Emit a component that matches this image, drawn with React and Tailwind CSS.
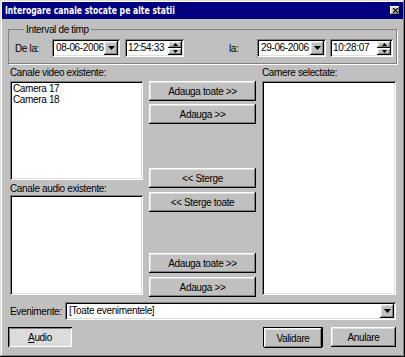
import React from 'react';

const raised =
  'bg-[#c0c0c0] shadow-[inset_-1px_-1px_0_#000,inset_1px_1px_0_#fff,inset_-2px_-2px_0_#808080,inset_2px_2px_0_#dfdfdf]';
const sunken =
  'bg-white shadow-[inset_1px_1px_0_#808080,inset_-1px_-1px_0_#fff,inset_2px_2px_0_#000,inset_-2px_-2px_0_#dfdfdf]';

const DownArrow = () => (
  <svg width="7" height="4" viewBox="0 0 7 4">
    <path d="M0 0h7L3.5 4z" fill="#000" />
  </svg>
);

const DropButton = () => (
  <div className={`w-[14px] h-[14px] shrink-0 flex items-center justify-center ${raised}`}>
    <DownArrow />
  </div>
);

const DateField = ({ value, width }) => (
  <div className={`${width} h-[18px] p-[2px] flex items-center ${sunken}`}>
    <span className="flex-1 pl-[2px] leading-[14px] whitespace-nowrap overflow-hidden">{value}</span>
    <DropButton />
  </div>
);

const TimeField = ({ value, width }) => (
  <div className={`${width} h-[18px] p-[2px] flex items-center ${sunken}`}>
    <span className="flex-1 pl-[1px] leading-[14px] whitespace-nowrap overflow-hidden">{value}</span>
    <div className="flex flex-col w-[14px] h-[14px] shrink-0">
      <div className={`h-[7px] flex items-center justify-center ${raised}`}>
        <svg width="5" height="3" viewBox="0 0 5 3">
          <path d="M2.5 0L5 3H0z" fill="#000" />
        </svg>
      </div>
      <div className={`h-[7px] flex items-center justify-center ${raised}`}>
        <svg width="5" height="3" viewBox="0 0 5 3">
          <path d="M0 0h5L2.5 3z" fill="#000" />
        </svg>
      </div>
    </div>
  </div>
);

const Btn = ({ children, className = '' }) => (
  <div className={`h-[20px] flex items-center justify-center whitespace-nowrap ${raised} ${className}`}>
    {children}
  </div>
);

export default function App() {
  return (
    <div
      className="w-[405px] h-[357px] bg-[#c0c0c0] p-[2px] flex flex-col text-[10px] tracking-[-0.35px] text-black shadow-[inset_-1px_-1px_0_#000,inset_1px_1px_0_#dfdfdf,inset_-2px_-2px_0_#808080,inset_2px_2px_0_#fff]"
      style={{ fontFamily: '"Liberation Sans", Arial, sans-serif' }}
    >
      {/* Title bar */}
      <div className="h-[17px] bg-[#000080] flex items-center justify-between pl-[3px] pr-[2px] overflow-hidden">
        <span
          className="inline-block text-white font-bold text-[11px] tracking-normal leading-[17px] whitespace-nowrap origin-left scale-x-[0.7]"
          style={{ fontFamily: '"DejaVu Sans", Verdana, sans-serif' }}
        >
          Interogare canale stocate pe alte statii
        </span>
        <div className={`w-[10px] h-[9px] mr-[1px] flex items-center justify-center ${raised}`}>
          <svg width="5" height="5" viewBox="0 0 5 5">
            <path d="M0 0L5 5M5 0L0 5" stroke="#000" strokeWidth="1.2" />
          </svg>
        </div>
      </div>

      <div className="flex-1 flex flex-col px-[6px]">
        {/* Interval de timp */}
        <fieldset className="mt-[4px] border border-[#808080] pl-[6px] pb-[6px] shadow-[1px_1px_0_#fff]">
          <legend className="ml-[9px] px-[2px] leading-[13px]">Interval de timp</legend>
          <div className="flex items-center mt-[3px]">
            <span className="w-[37px]">De la:</span>
            <DateField value="08-06-2006" width="w-[68px]" />
            <div className="w-[5px]" />
            <TimeField value="12:54:33" width="w-[59px]" />
            <span className="ml-[45px] w-[28px]">la:</span>
            <DateField value="29-06-2006" width="w-[69px]" />
            <div className="w-[4px]" />
            <TimeField value="10:28:07" width="w-[63px]" />
          </div>
        </fieldset>

        {/* Channels */}
        <div className="flex mt-[2px]">
          <div className="w-[133px] ml-[2px] flex flex-col">
            <span className="leading-[13px]">Canale video existente:</span>
            <div className={`mt-[2px] h-[99px] px-[3px] py-[2px] ${sunken}`}>
              <div className="leading-[11px]">Camera 17</div>
              <div className="leading-[11px]">Camera 18</div>
            </div>
            <span className="mt-[2px] leading-[13px]">Canale audio existente:</span>
            <div className={`h-[100px] ${sunken}`} />
          </div>

          <div className="w-[107px] ml-[6px] pt-[15px] flex flex-col">
            <Btn>Adauga toate &gt;&gt;</Btn>
            <Btn className="mt-[3px]">Adauga &gt;&gt;</Btn>
            <Btn className="mt-[44px]">&lt;&lt; Sterge</Btn>
            <Btn className="mt-[4px]">&lt;&lt; Sterge toate</Btn>
            <Btn className="mt-[41px]">Adauga toate &gt;&gt;</Btn>
            <Btn className="mt-[4px]">Adauga &gt;&gt;</Btn>
          </div>

          <div className="w-[134px] ml-[6px] flex flex-col">
            <span className="leading-[13px]">Camere selectate:</span>
            <div className={`mt-[2px] h-[214px] ${sunken}`} />
          </div>
        </div>

        {/* Evenimente */}
        <div className="flex items-center mt-[5px] ml-[2px] mr-[1px]">
          <span className="w-[55px]">Evenimente:</span>
          <div className={`flex-1 h-[18px] p-[2px] flex items-center ${sunken}`}>
            <span className="flex-1 pl-[2px] leading-[14px]">[Toate evenimentele]</span>
            <DropButton />
          </div>
        </div>

        {/* Bottom buttons */}
        <div className="flex items-center mt-[7px] mr-[1px]">
          <div className="w-[64px] h-[20px] flex items-center justify-center bg-[#dcdcdc] shadow-[inset_1px_1px_0_#000,inset_-1px_-1px_0_#fff,inset_2px_2px_0_#808080,inset_-2px_-2px_0_#dfdfdf]">
            <span>
              <span className="underline">A</span>udio
            </span>
          </div>
          <div className="flex-1" />
          <div className="w-[60px] h-[20px] border border-black">
            <Btn className="h-[18px]">Validare</Btn>
          </div>
          <Btn className="w-[65px] ml-[8px]">Anulare</Btn>
        </div>
      </div>
    </div>
  );
}
